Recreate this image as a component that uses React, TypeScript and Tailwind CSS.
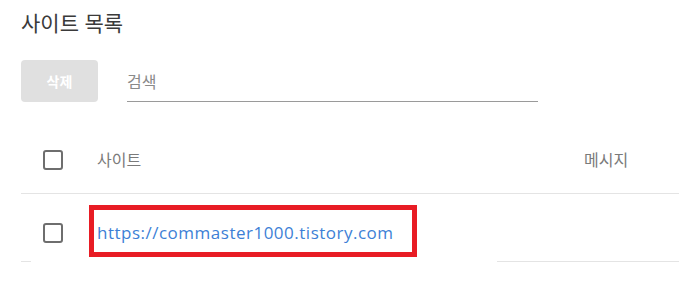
import React from "react"

const font = { fontFamily: '"Open Sans", "Noto Sans CJK KR", sans-serif' }

function Checkbox() {
  return <span className="block h-[20px] w-[20px] rounded-[3px] border-2 border-[#6e6e6e] bg-white" />
}

export default function App() {
  return (
    <div className="relative h-[290px] w-[679px] overflow-hidden bg-white text-[#333]" style={font}>
      <div className="pl-[21px] pt-[9px]">
        <h1 className="text-[21px] leading-[28px] font-normal text-[#3a3a3a]">사이트 목록</h1>

        <div className="mt-[23px] flex items-center">
          <button className="h-[42px] w-[77px] rounded-[4px] bg-[#e0e0e0] text-[14px] font-bold text-white">
            삭제
          </button>
          <div className="ml-[29px] flex h-[42px] w-[411px] items-center border-b border-[#9a9a9a] pt-[2px]">
            <span className="text-[16px] text-[#8a8a8a]">검색</span>
          </div>
        </div>

        <div className="mt-[16px]">
          <div className="flex h-[76px] items-center border-b border-[#e4e4e4] pt-[8px]">
            <div className="w-[76px] pl-[22px]">
              <Checkbox />
            </div>
            <div className="flex-1 text-[16px] text-[#7a7a7a]">사이트</div>
            <div className="w-[95px] text-[16px] text-[#7a7a7a]">메시지</div>
          </div>
          <div className="flex h-[68px] items-center border-b border-[#e4e4e4] pt-[10px]">
            <div className="w-[76px] pl-[22px]">
              <Checkbox />
            </div>
            <a href="#" className="text-[17px] tracking-[0.5px] text-[#3d7fd6]">
              https://commaster1000.tistory.com
            </a>
          </div>
        </div>
      </div>

      <div className="absolute left-[31px] top-[258px] h-[8px] w-[466px] bg-white" />
      <div className="absolute left-[89px] top-[205px] h-[52px] w-[328px] border-[5px] border-[#e81c24]" />
    </div>
  )
}
